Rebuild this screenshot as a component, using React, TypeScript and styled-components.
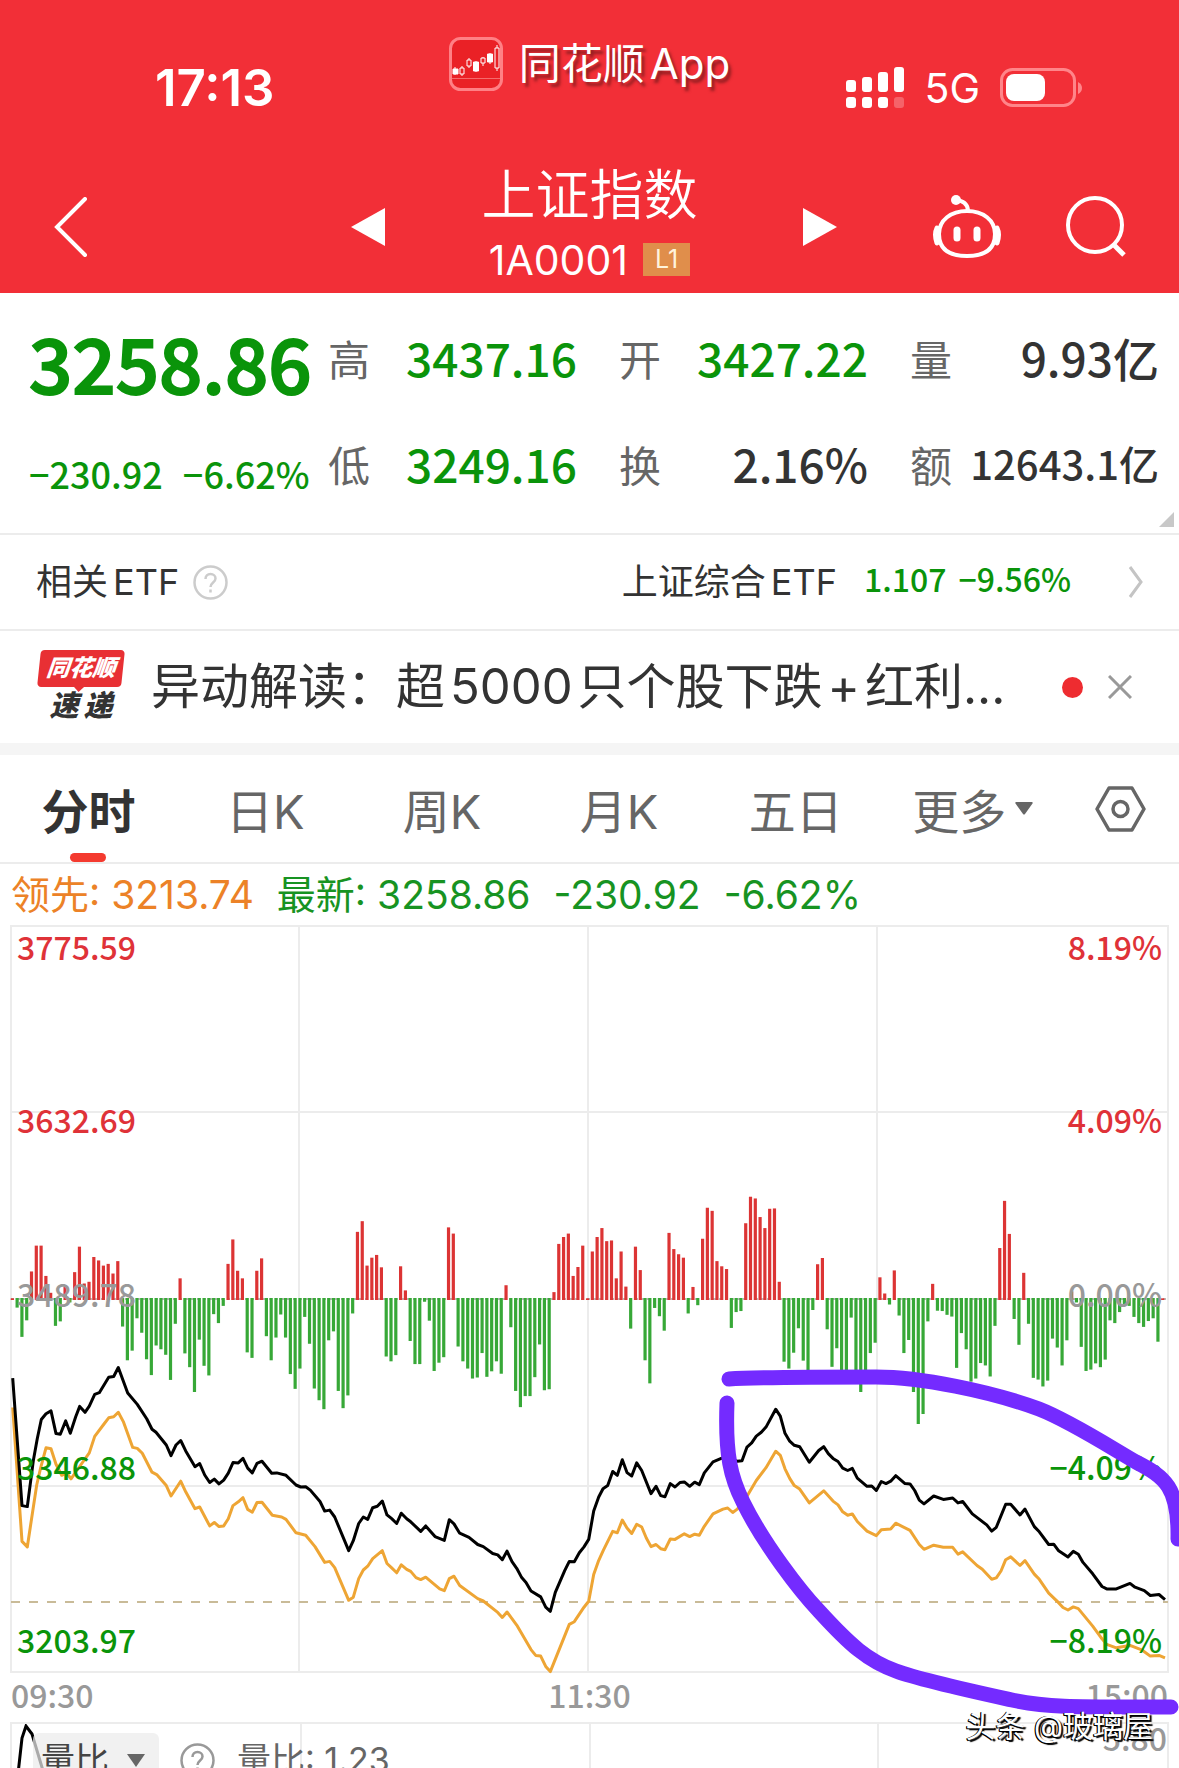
import React from "react";
import styled, { createGlobalStyle, css } from "styled-components";

const GlobalStyle = createGlobalStyle`
  *, *::before, *::after { box-sizing: border-box; }
  body { margin: 0; background: #fff; }
  button, select { font: inherit; color: inherit; border: 0; background: none; padding: 0; margin: 0; }
  h1, p, dl, dt, dd { margin: 0; font-weight: inherit; font-size: inherit; }
  svg { display: block; }
`;

const UI_FONT = `Inter, "Noto Sans CJK SC", sans-serif`;
const NUMBER_FONT = `"Noto Sans CJK SC", sans-serif`;

const RED = "#f22f37";
const GREEN = "#0a940a";
const INK = "#333";
const GREY = "#666";
const LINE = "#ececec";

type Tone = "up" | "down" | "flat" | "ink";
const toneColor: Record<Tone, string> = {
  up: "#df3238",
  down: GREEN,
  flat: "#999",
  ink: INK,
};

const Page = styled.main`
  height: 100vh;
  min-height: 1200px;
  display: flex;
  flex-direction: column;
  overflow: hidden;
  background: #fff;
  color: ${INK};
  font-family: ${UI_FONT};
`;

const Latin = styled.span`
  margin: 0 5px;
  &:last-child {
    margin-right: 0;
  }
`;

/* ---------- header ---------- */

const Header = styled.header`
  flex: none;
  background: ${RED};
  color: #fff;
`;

const StatusBar = styled.div`
  display: grid;
  grid-template-columns: 1fr auto 1fr;
  align-items: center;
  height: 160px;
  padding: 16px 97px 0;
`;

const Clock = styled.time`
  padding-left: 58px;
  font-size: 51px;
  line-height: 60px;
  font-weight: 600;
`;

const Brand = styled.div`
  display: flex;
  align-items: center;
  gap: 16px;
  margin-bottom: 48px;
  font-size: 42px;
  line-height: 54px;
  text-shadow: 3px 4px 3px rgba(90, 20, 20, 0.6);
`;

const StatusIcons = styled.div`
  display: flex;
  align-items: center;
  justify-content: flex-end;
  gap: 20px;
  font-size: 41px;
  line-height: 48px;
`;

const NavBar = styled.nav`
  display: grid;
  grid-template-columns: 1fr auto 1fr;
  align-items: center;
  height: 133px;
  padding: 0 46px 0 54px;
`;

const IconButton = styled.button`
  display: inline-flex;
  align-items: center;
  cursor: pointer;
`;

const Switcher = styled.div`
  display: flex;
  align-items: center;
  gap: 97px;
`;

const TitleBlock = styled.div`
  display: flex;
  flex-direction: column;
  align-items: center;
  padding-right: 8px;
`;

const Title = styled.h1`
  font-size: 54px;
  line-height: 66px;
  font-weight: 350;
`;

const CodeRow = styled.div`
  display: flex;
  align-items: center;
  gap: 15px;
  font-size: 41px;
  line-height: 62px;
`;

const LevelBadge = styled.span`
  padding: 0 12px;
  background: #e08e4b;
  color: #fff3dc;
  font-size: 25px;
  line-height: 33px;
`;

const Actions = styled.div`
  display: flex;
  justify-content: flex-end;
  align-items: center;
  gap: 64px;
  padding-right: 6px;
`;

/* ---------- quote ---------- */

const Quote = styled.section`
  flex: none;
  position: relative;
  display: grid;
  grid-template-columns: 299px 1fr;
  padding: 12px 20px 16px 29px;
  border-bottom: 2px solid ${LINE};
  font-family: ${NUMBER_FONT};
  color: ${GREEN};
  font-weight: 500;
`;

const PriceColumn = styled.div`
  display: flex;
  flex-direction: column;
  gap: 12px;
`;

const Price = styled.strong`
  font-size: 76px;
  line-height: 112px;
  font-weight: 500;
  -webkit-text-stroke: 2px ${GREEN};
`;

const Change = styled.p`
  display: flex;
  gap: 20px;
  font-size: 36px;
  line-height: 88px;
`;

const Stats = styled.dl`
  display: grid;
  grid-template-columns: repeat(3, 1fr);
  grid-auto-rows: 106px;
  column-gap: 42px;
`;

const Stat = styled.div`
  display: flex;
  justify-content: space-between;
  align-items: center;
  white-space: nowrap;
`;

const StatName = styled.dt`
  color: ${GREY};
  font-size: 42px;
  line-height: 60px;
  font-weight: 400;
`;

const StatValue = styled.dd<{ $tone: Tone; $small?: boolean }>`
  padding-bottom: 3px;
  color: ${(p) => toneColor[p.$tone]};
  font-size: ${(p) => (p.$small ? 40 : 46)}px;
  line-height: 60px;
`;

const ExpandCorner = styled.span`
  position: absolute;
  right: 5px;
  bottom: 6px;
  border-style: solid;
  border-width: 0 0 15px 15px;
  border-color: transparent transparent #c8c8c8 transparent;
`;

/* ---------- ETF and news rows ---------- */

const EtfRow = styled.section`
  flex: none;
  display: flex;
  align-items: center;
  height: 96px;
  padding: 0 35px 0 36px;
  border-bottom: 2px solid ${LINE};
  font-size: 36px;
  line-height: 48px;
`;

const EtfQuote = styled.a`
  display: flex;
  align-items: center;
  margin-left: auto;
  color: inherit;
  text-decoration: none;
`;

const EtfNumbers = styled.span`
  display: flex;
  gap: 12px;
  margin: 0 57px 0 27px;
  padding-bottom: 8px;
  color: ${GREEN};
  font-family: ${NUMBER_FONT};
  font-weight: 500;
  font-size: 32px;
`;

const HelpButton = styled(IconButton)`
  margin-left: 14px;
`;

const NewsRow = styled.section`
  flex: none;
  display: flex;
  align-items: center;
  height: 112px;
  padding: 0 47px 0 37px;
`;

const NewsLogo = styled.div`
  display: flex;
  flex-direction: column;
  flex: none;
  align-items: center;
  width: 88px;
  margin-right: 26px;
  font-style: italic;
  font-weight: 900;
  white-space: nowrap;
`;

const NewsLogoTop = styled.span`
  position: relative;
  width: 84px;
  border-radius: 4px;
  background: #e83034;
  color: #fff;
  font-size: 23px;
  line-height: 37px;
  text-align: center;
  transform: skewX(-6deg);
  &::after {
    content: "";
    position: absolute;
    left: 36px;
    top: 36px;
    border: 6px solid transparent;
    border-top-color: #e83034;
  }
`;

const NewsLogoBottom = styled.span`
  display: flex;
  gap: 5px;
  font-size: 29px;
  line-height: 37px;
`;

const Headline = styled.a`
  flex: none;
  color: ${INK};
  font-size: 49px;
  line-height: 64px;
  text-decoration: none;
  white-space: nowrap;
`;

const UnreadDot = styled.i`
  width: 21px;
  height: 21px;
  margin-left: auto;
  margin-right: 25px;
  border-radius: 50%;
  background: #ee2c30;
`;

const Band = styled.div`
  flex: none;
  height: 12px;
  background: #f5f5f5;
`;

/* ---------- tabs ---------- */

const Tabs = styled.div`
  flex: none;
  display: grid;
  grid-template-columns: repeat(6, 1fr) 10%;
  height: 109px;
  border-bottom: 2px solid ${LINE};
`;

const Tab = styled.button<{ $active?: boolean }>`
  position: relative;
  display: flex;
  align-items: center;
  justify-content: center;
  gap: 9px;
  color: ${GREY};
  font-size: 47px;
  cursor: pointer;
  ${(p) =>
    p.$active &&
    css`
      color: ${INK};
      font-weight: 700;
      &::after {
        content: "";
        position: absolute;
        bottom: 0;
        width: 36px;
        height: 9px;
        border-radius: 5px;
        background: #f43a2f;
      }
    `}
`;

/* ---------- chart ---------- */

const ChartArea = styled.section`
  position: relative;
  flex: 1 1 0;
  min-height: 0;
  display: flex;
  flex-direction: column;
  padding: 0 10px;
`;

const Legend = styled.p`
  flex: none;
  display: flex;
  gap: 23px;
  height: 61px;
  padding-left: 1px;
  font-size: 39px;
  line-height: 62px;
  color: #179322;
  white-space: pre;
`;

const Lead = styled.span`
  color: #ec8227;
`;

const Plot = styled.div`
  flex: none;
  position: relative;
`;

const PlotSvg = styled.svg`
  width: 100%;
  height: auto;
  overflow: visible;
`;

const Scale = styled.div<{ $side: "left" | "right" }>`
  position: absolute;
  top: 0;
  bottom: 13px;
  ${(p) => p.$side}: 7px;
  display: flex;
  flex-direction: column;
  justify-content: space-between;
  align-items: ${(p) => (p.$side === "left" ? "flex-start" : "flex-end")};
  font-family: ${NUMBER_FONT};
  font-weight: 500;
  font-size: 32px;
  line-height: 42px;
`;

const ScaleMark = styled.span<{ $tone: Tone }>`
  color: ${(p) => toneColor[p.$tone]};
`;

const TimeAxis = styled.div`
  flex: none;
  display: flex;
  justify-content: space-between;
  padding: 0 1px 7px;
  color: #999;
  font-family: ${NUMBER_FONT};
  font-weight: 500;
  font-size: 32px;
  line-height: 42px;
`;

const SubChart = styled.div`
  position: relative;
  flex: 1 0 auto;
  border: 2px solid ${LINE};
  border-bottom: 0;
  background: linear-gradient(${LINE}, ${LINE}) 25% 0 / 2px 100% no-repeat,
    linear-gradient(${LINE}, ${LINE}) 50% 0 / 2px 100% no-repeat,
    linear-gradient(${LINE}, ${LINE}) 75% 0 / 2px 100% no-repeat;
`;

const SubLine = styled.svg`
  position: absolute;
  left: 0;
  top: 0;
`;

const SubControls = styled.div`
  position: relative;
  display: flex;
  align-items: center;
  padding: 9px 0 0 21px;
  font-size: 34px;
  line-height: 50px;
  color: ${GREY};
`;

const IndicatorPicker = styled.label`
  display: flex;
  align-items: center;
  height: 54px;
  margin-right: 21px;
  padding: 0 14px 0 8px;
  border-radius: 6px;
  background: rgba(236, 236, 236, 0.72);
  color: #444;
`;

const IndicatorSelect = styled.select`
  appearance: none;
  outline: none;
  width: 86px;
`;

const IndicatorValue = styled.span`
  margin-left: 22px;
`;

const SubMax = styled.span`
  position: absolute;
  right: 0;
  top: -11px;
  color: #999;
  font-family: ${NUMBER_FONT};
  font-weight: 500;
  font-size: 32px;
  line-height: 48px;
`;

const Annotation = styled.svg`
  position: absolute;
  left: 0;
  top: 0;
  width: 100%;
  height: auto;
  pointer-events: none;
`;

const Watermark = styled.span`
  position: absolute;
  right: 26px;
  bottom: 22px;
  color: #fff;
  font-size: 30px;
  line-height: 40px;
  text-shadow: -1px 0 0 #000, -1px 1px 0 #000, 2px 2px 1px #000;
`;

/* ---------- data ---------- */

const STEP = 14.38;
const UNIT = 2.904;
const ZERO = 374;

const strength = [
  2, -25, -110, -62, 80, 155, 155, 67, 18, -78, -65, 35, -10, 78, 152, 45, 50, 122, 112, 97,
  102, 74, 110, -80, -178, -150, -56, -98, -175, -221, -135, -146, -162, -235, -72, 60, -158,
  -198, -270, -118, -194, -222, -44, -70, -20, 102, 173, 82, 60, -155, -171, 82, 118, -108,
  -178, -112, -45, -112, -218, -261, -202, -52, -130, -260, -294, -320, -120, -94, -267, -317,
  -280, -42, 195, 226, 97, 120, 128, 92, -167, -181, -163, 95, 25, -122, -189, -189, -8, -63,
  -209, -185, -169, 208, 190, -138, -181, -202, -231, -228, -157, -226, -210, -181, -217, 40,
  -82, -267, -314, -282, -282, -227, -132, -265, -262, 20, 160, 180, 190, 67, 93, 155, 2, 138,
  180, 206, 168, 170, 60, 138, 36, -86, 152, 84, -178, -245, -26, -50, -92, 192, 145, 130, 120,
  -42, 35, -18, 175, 265, 256, 110, 95, 87, -84, -38, -35, 220, 297, 292, 238, 206, 262, 263,
  50, -182, -202, -156, -85, -179, -208, -32, 101, 119, -88, -197, -143, -245, -210, -54, -208,
  -270, -225, -157, -127, 63, 16, -16, 83, -48, -157, -119, -270, -363, -334, -65, 44, -34,
  -35, -46, -51, -200, -99, -146, -240, -231, -186, -193, -225, -78, 148, 285, 189, -58, -133,
  76, -72, -229, -234, -254, -237, -115, -141, -193, -120, 22, -10, -139, -209, -205, -187,
  -198, -176, -62, -70, -38, -20, -20, -52, -70, -81, -64, -56, -124, 2,
];

const indexLine =
  "38,230 66,600 82,603 100,470 112,405 124,350 138,333 153,325 168,391 181,393 197,354 211,390 227,342 239,312 255,329 268,311 284,277 298,272 326,227 341,225 355,199 383,273 412,306 440,348 456,378 468,387 499,424 513,455 528,424 542,411 557,441 585,487 599,478 614,511 629,533 643,523 657,537 671,526 685,506 699,475 715,476 729,463 743,491 757,505 771,477 786,471 815,506 830,505 858,512 888,540 902,546 917,545 931,555 960,588 974,616 989,613 1004,633 1046,731 1060,702 1076,652 1090,633 1103,640 1118,606 1132,602 1147,587 1161,627 1175,638 1190,652 1204,622 1220,638 1232,647 1262,675 1277,659 1305,690 1333,701 1348,641 1362,653 1379,680 1407,692 1433,713 1450,719 1478,739 1493,743 1507,757 1521,732 1536,763 1550,782 1565,809 1578,823 1593,848 1622,865 1637,895 1651,907 1666,852 1694,789 1708,762 1723,763 1738,737 1752,720 1766,698 1781,616 1796,575 1809,551 1823,542 1838,501 1852,512 1867,467 1881,504 1895,514 1910,476 1925,498 1953,565 1968,544 1982,571 1995,574 2011,536 2025,546 2040,533 2053,531 2069,544 2084,532 2098,539 2113,505 2139,473 2169,461 2183,450 2198,467 2212,471 2226,470 2241,430 2255,418 2269,398 2284,387 2298,372 2327,320 2341,340 2355,390 2369,413 2383,425 2399,429 2428,474 2456,440 2471,429 2485,449 2499,463 2514,472 2528,491 2543,498 2557,492 2572,520 2601,544 2615,543 2629,556 2644,530 2658,536 2672,529 2687,513 2715,536 2730,537 2744,556 2758,584 2772,595 2801,572 2830,582 2858,578 2874,592 2888,588 2917,624 2960,656 2975,674 2989,663 3017,596 3032,596 3060,627 3075,610 3103,661 3118,676 3146,713 3161,712 3175,730 3204,749 3220,733 3235,741 3249,765 3278,798 3306,835 3320,842 3349,842 3390,826 3405,837 3433,847 3451,861 3477,858 3495,873";

const leadLine =
  "38,315 66,704 82,720 110,540 122,490 138,432 153,435 168,480 185,512 200,505 213,522 240,485 268,447 284,399 312,363 326,345 341,342 355,329 370,356 398,431 412,434 427,448 456,503 470,510 499,542 513,572 542,529 557,560 585,609 599,604 629,659 643,649 657,661 671,659 685,638 699,600 715,589 729,577 743,611 757,619 771,591 786,590 817,628 845,633 858,640 888,679 917,686 945,719 974,765 989,762 1004,780 1046,875 1060,866 1076,812 1090,787 1103,776 1118,754 1147,731 1161,768 1175,781 1190,795 1204,772 1220,785 1232,791 1248,809 1262,815 1277,808 1319,842 1333,847 1348,812 1362,805 1379,832 1433,870 1450,877 1493,910 1507,925 1521,909 1550,947 1593,1018 1607,1035 1622,1037 1637,1067 1651,1082 1708,945 1723,937 1752,895 1766,878 1781,800 1795,762 1810,730 1838,675 1852,679 1867,642 1881,665 1895,681 1910,654 1925,662 1939,694 1953,719 1968,713 1982,725 1995,728 2011,697 2025,698 2053,682 2069,690 2084,683 2098,686 2113,660 2139,624 2169,610 2183,607 2198,620 2212,610 2241,573 2269,527 2298,490 2327,442 2341,454 2355,493 2369,521 2383,542 2399,552 2428,592 2471,557 2499,587 2514,598 2528,618 2543,628 2557,624 2572,646 2601,674 2629,687 2644,670 2672,668 2687,651 2730,672 2758,713 2772,727 2801,715 2830,721 2858,721 2874,741 2888,734 2931,774 2947,785 2975,814 2989,810 3003,790 3017,757 3032,749 3060,774 3075,760 3103,799 3118,814 3146,854 3175,881 3189,896 3204,903 3220,894 3235,899 3278,950 3306,987 3320,1003 3349,1013 3390,1006 3427,1020 3451,1037 3477,1035 3495,1042";

const toPoints = (series: string) =>
  series
    .split(" ")
    .map((pair) => {
      const [x, y] = pair.split(",").map(Number);
      return `${(x / 3 - 10).toFixed(1)},${(ZERO + y / UNIT).toFixed(1)}`;
    })
    .join(" ");

const barX = (i: number) => (37 + i * STEP) / 3 - 10;

const stats: { name: string; value: string; tone: Tone; small?: boolean }[] = [
  { name: "高", value: "3437.16", tone: "down" },
  { name: "开", value: "3427.22", tone: "down" },
  { name: "量", value: "9.93亿", tone: "ink" },
  { name: "低", value: "3249.16", tone: "down" },
  { name: "换", value: "2.16%", tone: "ink" },
  { name: "额", value: "12643.1亿", tone: "ink", small: true },
];

const priceMarks: [string, Tone][] = [
  ["3775.59", "up"],
  ["3632.69", "up"],
  ["3489.78", "flat"],
  ["3346.88", "down"],
  ["3203.97", "down"],
];

const percentMarks: [string, Tone][] = [
  ["8.19%", "up"],
  ["4.09%", "up"],
  ["0.00%", "flat"],
  ["−4.09%", "down"],
  ["−8.19%", "down"],
];

/* ---------- icons ---------- */

const BrandIcon = () => (
  <svg width="54" height="54" viewBox="0 0 54 54" fill="none" stroke="#fff">
    <rect x="1.5" y="1.5" width="51" height="51" rx="10" fill="#ea2126" stroke="#ff8085" strokeWidth="3" />
    <path d="M3 41.500H51" stroke="#f56a6c" strokeWidth="1" />
    <path d="M6 30v8M13 29v10M20 21v10M27 24v11M34 20v9M41 16v11M48 8v26" strokeWidth="1" />
    <path d="M4 32h5v5H4zM24.500 25h5v9h-5zM38.500 17h5v8h-5z" fill="#fff" />
    <path d="M11 31h4v6h-4zM18 23h4v6h-4zM32 21h4v5h-4zM46 11h4v20h-4z" fill="#ea2126" />
  </svg>
);

const SignalIcon = () => (
  <svg width="58" height="42" viewBox="0 0 58 42" fill="#fff">
    <rect x="0" y="13" width="10" height="12" rx="3" />
    <rect x="16" y="10" width="10" height="15" rx="3" />
    <rect x="32" y="5" width="10" height="20" rx="3" />
    <rect x="48" y="0" width="10" height="25" rx="3" />
    <rect x="0" y="30" width="10" height="11" rx="3" />
    <rect x="16" y="30" width="10" height="11" rx="3" />
    <rect x="32" y="30" width="10" height="11" rx="3" />
    <rect x="48" y="30" width="10" height="11" rx="3" opacity="0.25" />
  </svg>
);

const BatteryIcon = () => (
  <svg width="82" height="40" viewBox="0 0 82 40">
    <rect x="1.500" y="1.500" width="73" height="36" rx="11" fill="none" stroke="#ff8589" strokeWidth="3" />
    <rect x="6" y="6" width="39" height="27" rx="8" fill="#fff" />
    <path d="M78 14q4 2 4 6t-4 6z" fill="#ff8589" />
  </svg>
);

const RobotIcon = () => (
  <svg width="70" height="66" viewBox="0 0 70 66" fill="none" stroke="#fff" strokeWidth="4">
    <path d="M35 17C51 17 63 26 63 40S54 62 35 62 7 54 7 40 19 17 35 17Z" />
    <path d="M5 34q-3 6 0 15M65 34q3 6 0 15" strokeWidth="5" strokeLinecap="round" />
    <path d="M36 16Q35 7 24 6" />
    <circle cx="24" cy="6" r="5" fill="#fff" stroke="none" />
    <path d="M25 36v8M45 36v8" strokeWidth="7" strokeLinecap="round" />
  </svg>
);

const SearchIcon = () => (
  <svg width="61" height="61" viewBox="0 0 61 61" fill="none" stroke="#fff" strokeWidth="4">
    <circle cx="29" cy="29" r="27" />
    <path d="M47 48L58 59" strokeWidth="5" />
  </svg>
);

const HelpIcon = ({ color }: { color: string }) => (
  <svg width="35" height="35" viewBox="0 0 35 35" fill="none" stroke={color} strokeWidth="2.500">
    <circle cx="17.500" cy="17.500" r="16" />
    <path d="M12.500 14c0-3 2-5 5-5s5 2 5 4.500c0 4-5 4-5 8.500M17.500 24.500v3" />
  </svg>
);

/* ---------- page ---------- */

export default function App() {
  return (
    <>
      <GlobalStyle />
      <Page>
        <Header>
          <StatusBar>
            <Clock>17:13</Clock>
            <Brand>
              <BrandIcon />
              <span>
                同花顺<Latin>App</Latin>
              </span>
            </Brand>
            <StatusIcons>
              <SignalIcon />
              <span>5G</span>
              <BatteryIcon />
            </StatusIcons>
          </StatusBar>
          <NavBar>
            <IconButton aria-label="返回">
              <svg width="34" height="60" viewBox="0 0 34 60" fill="none" stroke="#fff" strokeWidth="4">
                <path d="M31 2L3 30L31 58" strokeLinecap="round" />
              </svg>
            </IconButton>
            <Switcher>
              <IconButton aria-label="上一个">
                <svg width="34" height="38" viewBox="0 0 34 38" fill="#fff">
                  <path d="M34 0V38L0 19Z" />
                </svg>
              </IconButton>
              <TitleBlock>
                <Title>上证指数</Title>
                <CodeRow>
                  <span>1A0001</span>
                  <LevelBadge>L1</LevelBadge>
                </CodeRow>
              </TitleBlock>
              <IconButton aria-label="下一个">
                <svg width="34" height="38" viewBox="0 0 34 38" fill="#fff">
                  <path d="M0 0V38L34 19Z" />
                </svg>
              </IconButton>
            </Switcher>
            <Actions>
              <IconButton aria-label="智能助手">
                <RobotIcon />
              </IconButton>
              <IconButton aria-label="搜索">
                <SearchIcon />
              </IconButton>
            </Actions>
          </NavBar>
        </Header>

        <Quote>
          <PriceColumn>
            <Price>3258.86</Price>
            <Change>
              <span>−230.92</span>
              <span>−6.62%</span>
            </Change>
          </PriceColumn>
          <Stats>
            {stats.map((s) => (
              <Stat key={s.name}>
                <StatName>{s.name}</StatName>
                <StatValue $tone={s.tone} $small={s.small}>
                  {s.value}
                </StatValue>
              </Stat>
            ))}
          </Stats>
          <ExpandCorner />
        </Quote>

        <EtfRow>
          <span>
            相关<Latin>ETF</Latin>
          </span>
          <HelpButton aria-label="说明">
            <HelpIcon color="#ccc" />
          </HelpButton>
          <EtfQuote href="#etf">
            <span>
              上证综合<Latin>ETF</Latin>
            </span>
            <EtfNumbers>
              <span>1.107</span>
              <span>−9.56%</span>
            </EtfNumbers>
            <svg width="16" height="32" viewBox="0 0 16 32" fill="none" stroke="#c4c4c4" strokeWidth="3">
              <path d="M2 1L13 16L2 31" />
            </svg>
          </EtfQuote>
        </EtfRow>

        <NewsRow>
          <NewsLogo>
            <NewsLogoTop>同花顺</NewsLogoTop>
            <NewsLogoBottom>
              <span>速</span>
              <span>递</span>
            </NewsLogoBottom>
          </NewsLogo>
          <Headline href="#news">
            异动解读：超<Latin>5000</Latin>只个股下跌<Latin>+</Latin>
            <span>红利...</span>
          </Headline>
          <UnreadDot />
          <IconButton aria-label="关闭">
            <svg width="24" height="24" viewBox="0 0 24 24" fill="none" stroke="#999" strokeWidth="3">
              <path d="M1 1L23 23M23 1L1 23" />
            </svg>
          </IconButton>
        </NewsRow>
        <Band />

        <Tabs>
          <Tab $active>分时</Tab>
          <Tab>日K</Tab>
          <Tab>周K</Tab>
          <Tab>月K</Tab>
          <Tab>五日</Tab>
          <Tab>
            更多
            <svg width="18" height="13" viewBox="0 0 18 13" fill={GREY}>
              <path d="M1 0H17Q18 0 17.500 1.500L10 12Q9 13 8 12L.5 1.500Q0 0 1 0Z" />
            </svg>
          </Tab>
          <Tab aria-label="设置">
            <svg width="51" height="46" viewBox="0 0 51 46" fill="none" stroke={GREY} strokeWidth="3.500">
              <path d="M14 2H37L49 23L37 44H14L2 23Z" strokeLinejoin="round" />
              <circle cx="25.500" cy="23" r="7.500" />
            </svg>
          </Tab>
        </Tabs>

        <ChartArea>
          <Legend>
            <Lead>领先: 3213.74</Lead>
            <span>最新: 3258.86</span>
            <span>-230.92</span>
            <span>-6.62%</span>
          </Legend>
          <Plot>
            <PlotSvg viewBox="0 0 1159 748" fill="none">
              <path
                d="M1 1H1158V747H1ZM289 1V747M578 1V747M867 1V747M1 187H1158M1 561H1158"
                stroke={LINE}
                strokeWidth="2"
              />
              <path d="M1 374H1158" stroke="#777" strokeWidth="1" strokeDasharray="3 3" />
              {strength.map((v, i) => (
                <line
                  key={i}
                  x1={barX(i)}
                  x2={barX(i)}
                  y1={ZERO + (v > 0 ? 1 : -1)}
                  y2={ZERO - v / UNIT}
                  stroke={v > 0 ? "#dc3434" : "#37a837"}
                  strokeWidth="3.200"
                />
              ))}
              <path d="M1 677H1158" stroke="#c9bb98" strokeWidth="2" strokeDasharray="9 9" />
              <g strokeWidth="3" strokeLinejoin="round">
                <polyline points={toPoints(leadLine)} stroke="#eea534" />
                <polyline points={toPoints(indexLine)} stroke="#000" />
              </g>
            </PlotSvg>
            <Scale $side="left">
              {priceMarks.map(([text, tone]) => (
                <ScaleMark key={text} $tone={tone}>
                  {text}
                </ScaleMark>
              ))}
            </Scale>
            <Scale $side="right">
              {percentMarks.map(([text, tone]) => (
                <ScaleMark key={text} $tone={tone}>
                  {text}
                </ScaleMark>
              ))}
            </Scale>
          </Plot>
          <TimeAxis>
            <span>09:30</span>
            <span>11:30</span>
            <span>15:00</span>
          </TimeAxis>
          <SubChart>
            <SubLine width="60" height="50" viewBox="0 0 60 50" fill="none" stroke="#000" strokeWidth="3">
              <path d="M6 50L10 14L14 2L20 10L32 50" />
            </SubLine>
            <SubControls>
              <IndicatorPicker>
                <IndicatorSelect aria-label="指标" defaultValue="量比">
                  <option>量比</option>
                </IndicatorSelect>
                <svg width="18" height="13" viewBox="0 0 18 13" fill={GREY}>
                  <path d="M0 0H18L9 13Z" />
                </svg>
              </IndicatorPicker>
              <IconButton aria-label="指标说明">
                <HelpIcon color="#999" />
              </IconButton>
              <IndicatorValue>量比: 1.23</IndicatorValue>
            </SubControls>
            <SubMax>5.80</SubMax>
          </SubChart>

          <Annotation
            viewBox="0 863 1179 905"
            fill="none"
            stroke="#742bff"
            strokeWidth="15"
            strokeLinecap="round"
            strokeLinejoin="round"
          >
            <path d="M729 1378C760 1376 830 1376 876 1376C920 1376 990 1390 1039 1408C1070 1420 1110 1446 1136 1461C1165 1476 1179 1486 1178 1538" />
            <path d="M727 1402C725 1455 731 1477 743 1501C763 1542 800 1590 819 1610C850 1644 868 1660 896 1670C920 1679 980 1692 1012 1699C1050 1707 1080 1706 1171 1706" />
          </Annotation>
          <Watermark>头条 @玻璃屋</Watermark>
        </ChartArea>
      </Page>
    </>
  );
}
